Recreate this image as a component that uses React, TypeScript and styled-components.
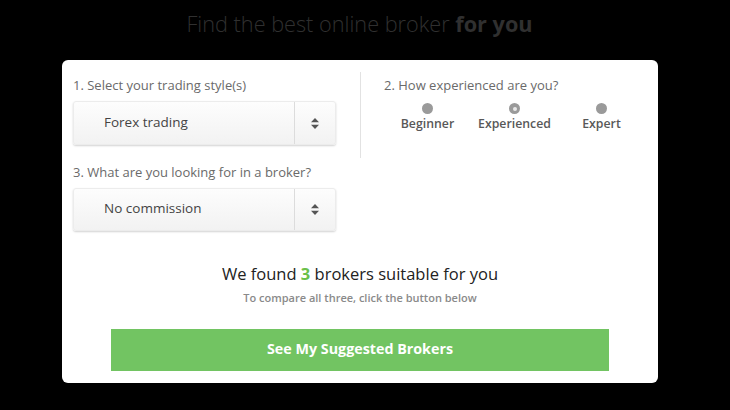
import React, { useState } from 'react';
import styled, { createGlobalStyle } from 'styled-components';

const GlobalStyle = createGlobalStyle`
  html, body {
    margin: 0;
    padding: 0;
    background: #000;
    font-family: 'Open Sans', 'Liberation Sans', sans-serif;
  }
  * { box-sizing: border-box; }
`;

const Page = styled.div`
  width: 730px;
  height: 410px;
  background: #000;
  overflow: hidden;
`;

const Heading = styled.h1`
  margin: 0;
  height: 60px;
  padding: 6px 11px 0 0;
  text-align: center;
  font-size: 21.7px;
  line-height: 36px;
  font-weight: 300;
  color: #303030;

  strong {
    font-weight: 700;
  }
`;

const Card = styled.div`
  margin-left: 62px;
  width: 596px;
  height: 323px;
  background: #fff;
  border-radius: 6px;
  padding: 15px 11px 12px;
  display: flex;
  flex-direction: column;
`;

const Top = styled.div`
  display: grid;
  grid-template-columns: 263px 48px 1fr;
  align-items: start;
`;

const Column = styled.div`
  display: flex;
  flex-direction: column;
`;

const Divider = styled.div`
  justify-self: center;
  width: 1px;
  height: 86px;
  margin-top: -3px;
  background: #e2e2e2;
`;

const Label = styled.div<{ $gap?: number }>`
  font-size: 13px;
  line-height: 20px;
  color: #6a6a6a;
  margin-top: ${(p) => p.$gap ?? 0}px;
  margin-bottom: 6px;
`;

const Select = styled.div<{ $h: number }>`
  display: flex;
  height: ${(p) => p.$h}px;
  border: 1px solid #ececec;
  border-radius: 3px;
  background: linear-gradient(#fdfdfd, #f2f2f2);
  box-shadow: 0 1px 2px rgba(0, 0, 0, 0.18);
`;

const SelectValue = styled.div`
  flex: 1;
  display: flex;
  align-items: center;
  padding: 0 0 3px 30px;
  font-size: 13.5px;
  color: #444;
  border-right: 1px solid #dcdcdc;
`;

const SelectArrow = styled.div`
  width: 40px;
  display: flex;
  align-items: center;
  justify-content: center;
`;

const Options = styled.div`
  display: flex;
  margin-top: 2px;
`;

const Option = styled.label`
  width: 87px;
  display: flex;
  flex-direction: column;
  align-items: center;
  cursor: pointer;
`;

const Dot = styled.span<{ $on: boolean }>`
  width: 11px;
  height: 11px;
  border-radius: 50%;
  background: #9a9a9a;
  display: flex;
  align-items: center;
  justify-content: center;

  &::after {
    content: '';
    width: 4px;
    height: 4px;
    border-radius: 50%;
    background: ${(p) => (p.$on ? '#e8e8e8' : 'transparent')};
  }
`;

const OptionText = styled.span`
  margin-top: 1px;
  font-size: 12.3px;
  line-height: 17px;
  font-weight: 600;
  color: #585858;
`;

const Result = styled.div`
  margin-top: 31px;
  text-align: center;
  font-size: 16.5px;
  line-height: 24px;
  color: #222;

  b {
    color: #6cc04a;
    font-weight: 700;
  }
`;

const Hint = styled.div`
  margin-top: 4px;
  text-align: center;
  font-size: 11px;
  line-height: 16px;
  font-weight: 600;
  color: #8a8a8a;
`;

const Button = styled.button`
  margin: 23px auto 0;
  width: 498px;
  height: 42px;
  padding: 0 0 4px;
  border: none;
  background: #72c462;
  color: #fff;
  font-family: inherit;
  font-size: 14.3px;
  font-weight: 700;
  cursor: pointer;
`;

const Arrows: React.FC = () => (
  <svg width="8" height="11" viewBox="0 0 8 11">
    <path d="M4 0 L8 4.3 H0 Z" fill="#555" />
    <path d="M4 11 L8 6.7 H0 Z" fill="#555" />
  </svg>
);

const levels = ['Beginner', 'Experienced', 'Expert'];

const App: React.FC = () => {
  const [level, setLevel] = useState('Experienced');

  return (
    <Page>
      <GlobalStyle />
      <Heading>
        Find the best online broker <strong>for you</strong>
      </Heading>
      <Card>
        <Top>
          <Column>
            <Label>1. Select your trading style(s)</Label>
            <Select $h={44}>
              <SelectValue>Forex trading</SelectValue>
              <SelectArrow>
                <Arrows />
              </SelectArrow>
            </Select>
            <Label $gap={17}>3. What are you looking for in a broker?</Label>
            <Select $h={43}>
              <SelectValue>No commission</SelectValue>
              <SelectArrow>
                <Arrows />
              </SelectArrow>
            </Select>
          </Column>
          <Divider />
          <Column>
            <Label>2. How experienced are you?</Label>
            <Options>
              {levels.map((l) => (
                <Option key={l} onClick={() => setLevel(l)}>
                  <Dot $on={level === l} />
                  <OptionText>{l}</OptionText>
                </Option>
              ))}
            </Options>
          </Column>
        </Top>
        <Result>
          We found <b>3</b> brokers suitable for you
        </Result>
        <Hint>To compare all three, click the button below</Hint>
        <Button>See My Suggested Brokers</Button>
      </Card>
    </Page>
  );
};

export default App;
